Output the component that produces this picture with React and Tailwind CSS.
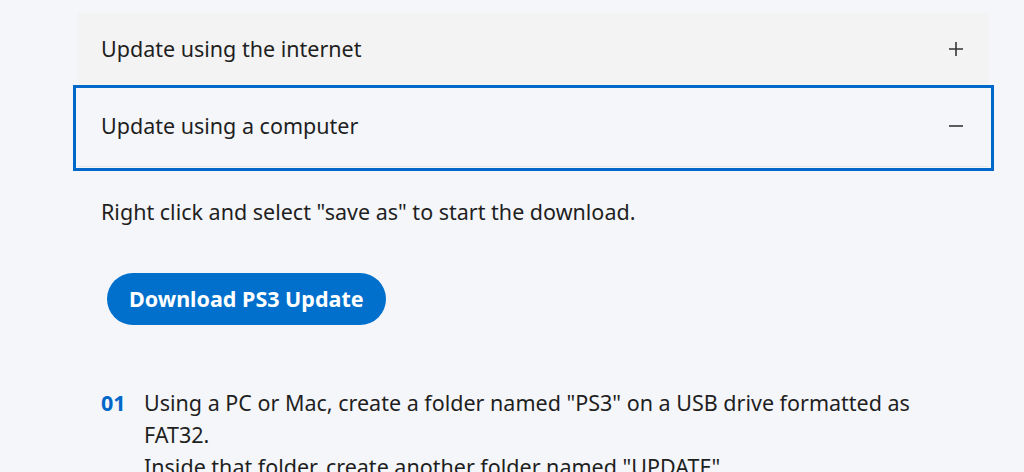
import React from 'react';

const PlusIcon = () => (
  <svg width="18" height="18" viewBox="0 0 18 18" fill="none" stroke="#363636" strokeWidth="1.6">
    <path d="M9 2v14M2 9h14" />
  </svg>
);

const MinusIcon = () => (
  <svg width="18" height="18" viewBox="0 0 18 18" fill="none" stroke="#363636" strokeWidth="1.6">
    <path d="M2 9h14" />
  </svg>
);

export default function App() {
  return (
    <div className="h-[472px] overflow-hidden bg-[#f5f6fa] text-[#1f1f1f] font-['Noto_Sans',sans-serif] pt-[13px] pl-[78px] pr-[35px]">
      {/* accordion */}
      <div className="w-[911px]">
        <div className="h-[72px] bg-[#f3f3f3] flex items-center justify-between pl-[23px] pr-[24px]">
          <span className="text-[21.5px]">Update using the internet</span>
          <PlusIcon />
        </div>
        <div className="relative h-[82px] flex items-center justify-between pl-[23px] pr-[24px] border-b border-[#e6e7ea]">
          <div className="absolute left-[-5px] right-[-5px] top-0 bottom-[-5px] border-[3px] border-[#0068c9] pointer-events-none" />
          <span className="text-[21.5px] mt-[2px]">Update using a computer</span>
          <MinusIcon />
        </div>
      </div>

      {/* body */}
      <div className="pl-[23px] pt-[29px]">
        <p className="text-[21.5px] leading-[32px]">Right click and select "save as" to start the download.</p>
        <button className="mt-[45px] ml-[6px] h-[52px] px-[22px] rounded-full bg-[#0070cc] text-white text-[21.5px] font-bold">
          Download PS3 Update
        </button>
        <ol className="mt-[62px] text-[21.5px] leading-[32px]">
          <li className="flex">
            <span className="w-[43px] shrink-0 text-[#0068c9] font-bold">01</span>
            <div className="w-[800px]">
              <p>Using a PC or Mac, create a folder named "PS3" on a USB drive formatted as FAT32.</p>
              <p>Inside that folder, create another folder named "UPDATE".</p>
            </div>
          </li>
        </ol>
      </div>
    </div>
  );
}
